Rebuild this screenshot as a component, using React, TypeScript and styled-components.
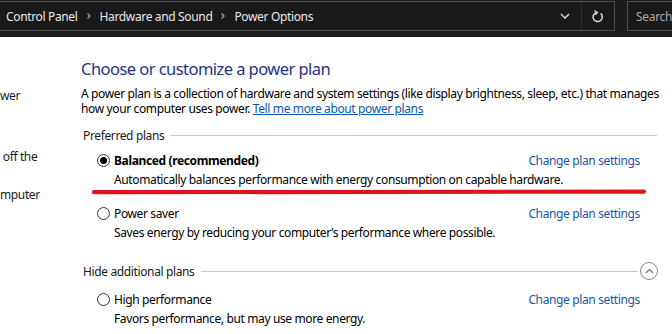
import React from "react";
import styled, { createGlobalStyle } from "styled-components";

const Global = createGlobalStyle`
  html, body { margin: 0; padding: 0; background: #ffffff; }
  body { width: 672px; height: 334px; overflow: hidden; font-family: "Noto Sans", "Open Sans", sans-serif; }
  #root { width: 672px; height: 334px; overflow: hidden; }
`;

const Page = styled.div`
  display: flex;
  flex-direction: column;
  width: 672px;
  height: 334px;
  overflow: hidden;
`;

const TopBar = styled.div`
  display: flex;
  align-items: flex-start;
  gap: 12px;
  height: 37px;
  padding-top: 1px;
  box-sizing: border-box;
  background: #1b1b1b;
  flex-shrink: 0;
`;

const AddressBox = styled.div`
  display: flex;
  align-items: center;
  width: 616px;
  height: 30px;
  margin-left: -1px;
  box-sizing: border-box;
  border: 1px solid #4d4d4d;
  background: #191919;
  flex-shrink: 0;
`;

const Crumbs = styled.div`
  flex: 1;
  display: flex;
  align-items: center;
  padding-left: 6px;
  color: #e8e8e8;
  font-size: 12px;
  letter-spacing: -0.35px;
  white-space: nowrap;
`;

const Crumb = styled.span`
  color: #e8e8e8;
`;

const CrumbSep = styled.span`
  display: inline-flex;
  align-items: center;
  justify-content: center;
  width: 22px;
`;

const DropBtn = styled.div`
  display: flex;
  align-items: center;
  justify-content: center;
  width: 32px;
  height: 28px;
  border-right: 1px solid #2c2c2c;
`;

const RefreshBtn = styled.div`
  display: flex;
  align-items: center;
  justify-content: center;
  width: 32px;
  height: 28px;
`;

const SearchBox = styled.div`
  flex: 1;
  height: 30px;
  box-sizing: border-box;
  border: 1px solid #4d4d4d;
  border-right: none;
  background: #191919;
  color: #a8a8a8;
  font-size: 12px;
  letter-spacing: -0.3px;
  display: flex;
  align-items: center;
  padding-left: 8px;
  white-space: nowrap;
`;

const Body = styled.div`
  flex: 1;
  display: flex;
  background: #ffffff;
  color: #000000;
  font-size: 12px;
  letter-spacing: -0.37px;
`;

const Sidebar = styled.div`
  width: 81px;
  flex-shrink: 0;
  display: flex;
  flex-direction: column;
  padding-top: 51px;
  box-sizing: border-box;
`;

const SideItem = styled.div<{ $gap: number }>`
  height: 15px;
  line-height: 15px;
  margin-bottom: ${(p) => p.$gap}px;
  white-space: nowrap;
  color: #1a1a1a;
`;

const Main = styled.div`
  width: 576px;
  display: flex;
  flex-direction: column;
  padding-top: 20px;
  box-sizing: border-box;
`;

const Heading = styled.h1`
  margin: 0;
  font-size: 16.5px;
  font-weight: 400;
  letter-spacing: -0.55px;
  line-height: 24px;
  color: #1e3287;
`;

const Intro = styled.p`
  margin: 5px 0 0 0;
  line-height: 15px;
  font-size: 12px;
  white-space: nowrap;
`;

const Link = styled.a`
  color: #0b57b0;
  text-decoration: underline;
  cursor: pointer;
`;

const SectionHead = styled.div<{ $top: number }>`
  display: flex;
  align-items: center;
  margin-top: ${(p) => p.$top}px;
  height: 18px;
  padding-left: 2px;
  color: #1a1a1a;
`;

const SectionLabel = styled.span`
  white-space: nowrap;
  margin-right: 6px;
`;

const Rule = styled.div`
  flex: 1;
  height: 1px;
  background: #c8c8c8;
`;

const CollapseBtn = styled.div`
  width: 16px;
  height: 16px;
  border: 1px solid #8a8a8a;
  border-radius: 50%;
  margin-left: 2px;
  margin-right: -1px;
  display: flex;
  align-items: center;
  justify-content: center;
`;

const PlanBlock = styled.div<{ $top: number }>`
  position: relative;
  margin-top: ${(p) => p.$top}px;
  padding-left: 16px;
  padding-right: 17px;
`;

const PlanRow = styled.div`
  display: flex;
  align-items: center;
  height: 20px;
`;

const Radio = styled.span<{ $checked?: boolean }>`
  width: 11px;
  height: 11px;
  border: 1px solid #333333;
  border-radius: 50%;
  display: inline-flex;
  align-items: center;
  justify-content: center;
  margin-right: 4px;
  flex-shrink: 0;
  &::after {
    content: "";
    display: ${(p) => (p.$checked ? "block" : "none")};
    width: 7px;
    height: 7px;
    border-radius: 50%;
    background: #000000;
  }
`;

const PlanName = styled.span<{ $bold?: boolean }>`
  flex: 1;
  font-weight: ${(p) => (p.$bold ? 700 : 400)};
  white-space: nowrap;
`;

const PlanLink = styled.a`
  color: #1559a8;
  white-space: nowrap;
  cursor: pointer;
`;

const PlanDesc = styled.div`
  padding-left: 17px;
  height: 20px;
  line-height: 20px;
  white-space: nowrap;
`;

const Annotation = styled.svg`
  position: absolute;
  left: 10px;
  top: 39px;
  overflow: visible;
`;

const Chevron = () => (
  <svg width="6" height="8" viewBox="0 0 6 8">
    <path d="M1.5 1.5 L4 4 L1.5 6.5" fill="none" stroke="#9a9a9a" strokeWidth="1.4" />
  </svg>
);

export default function App() {
  return (
    <Page>
      <Global />
      <TopBar>
        <AddressBox>
          <Crumbs>
            <Crumb>Control Panel</Crumb>
            <CrumbSep><Chevron /></CrumbSep>
            <Crumb>Hardware and Sound</Crumb>
            <CrumbSep><Chevron /></CrumbSep>
            <Crumb>Power Options</Crumb>
          </Crumbs>
          <DropBtn>
            <svg width="10" height="6" viewBox="0 0 10 6">
              <path d="M1 1 L5 5 L9 1" fill="none" stroke="#d0d0d0" strokeWidth="1.6" />
            </svg>
          </DropBtn>
          <RefreshBtn>
            <svg width="12" height="13" viewBox="0 0 12 13">
              <path d="M4.2 2.6 A4.6 4.6 0 1 0 8.6 3.4" fill="none" stroke="#d8d8d8" strokeWidth="1.5" />
              <path d="M2.6 0.6 L5.4 2.6 L3.2 4.8" fill="none" stroke="#d8d8d8" strokeWidth="1.4" />
            </svg>
          </RefreshBtn>
        </AddressBox>
        <SearchBox>Search</SearchBox>
      </TopBar>
      <Body>
        <Sidebar>
          <SideItem $gap={46}>wer</SideItem>
          <SideItem $gap={23}>&nbsp;off the</SideItem>
          <SideItem $gap={0}>mputer</SideItem>
        </Sidebar>
        <Main>
          <Heading>Choose or customize a power plan</Heading>
          <Intro>
            A power plan is a collection of hardware and system settings (like display brightness, sleep, etc.) that manages
            <br />
            how your computer uses power. <Link>Tell me more about power plans</Link>
          </Intro>
          <SectionHead $top={10}>
            <SectionLabel>Preferred plans</SectionLabel>
            <Rule />
          </SectionHead>
          <PlanBlock $top={6}>
            <PlanRow>
              <Radio $checked />
              <PlanName $bold>Balanced (recommended)</PlanName>
              <PlanLink>Change plan settings</PlanLink>
            </PlanRow>
            <PlanDesc>Automatically balances performance with energy consumption on capable hardware.</PlanDesc>
            <Annotation width="556" height="6" viewBox="0 0 556 6">
              <path d="M3 3.2 C 120 4.2, 300 3.8, 553 2.6" fill="none" stroke="#e0101c" strokeWidth="4.2" strokeLinecap="round" />
            </Annotation>
          </PlanBlock>
          <PlanBlock $top={13}>
            <PlanRow>
              <Radio />
              <PlanName>Power saver</PlanName>
              <PlanLink>Change plan settings</PlanLink>
            </PlanRow>
            <PlanDesc>Saves energy by reducing your computer’s performance where possible.</PlanDesc>
          </PlanBlock>
          <SectionHead $top={19}>
            <SectionLabel>Hide additional plans</SectionLabel>
            <Rule />
            <CollapseBtn>
              <svg width="9" height="6" viewBox="0 0 9 6">
                <path d="M1 5 L4.5 1.5 L8 5" fill="none" stroke="#7a7a7a" strokeWidth="1.3" />
              </svg>
            </CollapseBtn>
          </SectionHead>
          <PlanBlock $top={9}>
            <PlanRow>
              <Radio />
              <PlanName>High performance</PlanName>
              <PlanLink>Change plan settings</PlanLink>
            </PlanRow>
            <PlanDesc>Favors performance, but may use more energy.</PlanDesc>
          </PlanBlock>
        </Main>
      </Body>
    </Page>
  );
}
